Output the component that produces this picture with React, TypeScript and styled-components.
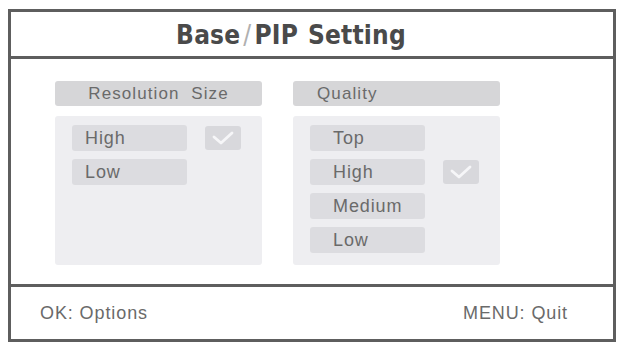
import React from 'react';
import styled, { createGlobalStyle } from 'styled-components';

const GlobalStyle = createGlobalStyle`
  html, body {
    margin: 0;
    padding: 0;
    background: #ffffff;
  }
  body {
    font-family: 'Liberation Sans', Arial, sans-serif;
  }
`;

// frame
const Frame = styled.div`
  box-sizing: border-box;
  margin: 9px 0 0 8px;
  width: 608px;
  height: 333px;
  border: 3px solid #5e5e5e;
  display: flex;
  flex-direction: column;
  background: #fff;
`;

const TitleBar = styled.div`
  height: 47px;
  border-bottom: 3px solid #5e5e5e;
  display: flex;
  align-items: center;
  justify-content: center;
  font-family: 'DejaVu Sans Condensed', 'Liberation Sans', Arial, sans-serif;
  font-weight: 700;
  font-size: 26px;
  letter-spacing: 0.2px;
  color: #4a4a4a;
  padding: 2px 42px 0 0;
  box-sizing: border-box;
`;

const Slash = styled.span`
  font-weight: 400;
  color: #b0b0b0;
  margin: 0 3px;
`;

const TitleGap = styled.span`
  display: inline-block;
  width: 10px;
`;

const Content = styled.div`
  flex: 1;
  display: flex;
  gap: 31px;
  padding: 22px 0 0 44px;
`;

const Column = styled.div`
  width: 207px;
  display: flex;
  flex-direction: column;
  gap: 10px;
`;

const Header = styled.div<{ $align: 'center' | 'left' }>`
  height: 25px;
  border-radius: 3px;
  background: #d6d6d8;
  color: #6a6a6a;
  font-size: 17px;
  letter-spacing: 1.1px;
  line-height: 25px;
  text-align: ${({ $align }) => $align};
  padding-left: ${({ $align }) => ($align === 'left' ? '24px' : '0')};
`;

const Panel = styled.div`
  height: 149px;
  box-sizing: border-box;
  border-radius: 3px;
  background: #eeeef1;
  padding: 9px 0 0 17px;
  display: flex;
  flex-direction: column;
  gap: 8px;
`;

const Row = styled.div`
  display: flex;
  align-items: center;
  gap: 18px;
`;

const Item = styled.div<{ $indent: number }>`
  width: 115px;
  height: 26px;
  box-sizing: border-box;
  border-radius: 3px;
  background: #dcdce0;
  color: #6a6a6a;
  font-size: 18px;
  letter-spacing: 0.9px;
  line-height: 26px;
  padding-left: ${({ $indent }) => $indent}px;
`;

const CheckBox = styled.div`
  width: 36px;
  height: 24px;
  border-radius: 3px;
  background: #d8d8dc;
  display: flex;
  align-items: center;
  justify-content: center;
`;

const Footer = styled.div`
  height: 52px;
  border-top: 3px solid #5e5e5e;
  display: flex;
  align-items: center;
  justify-content: space-between;
  padding: 0 45px 0 29px;
  color: #6a6a6a;
  font-size: 18px;
  letter-spacing: 0.9px;
`;

const Check = () => (
  <CheckBox>
    <svg width="24" height="16" viewBox="0 0 24 16">
      <polyline
        points="3,7 10,13 21,3"
        fill="none"
        stroke="#f6f6f8"
        strokeWidth="2.8"
        strokeLinecap="round"
        strokeLinejoin="round"
      />
    </svg>
  </CheckBox>
);

type Option = { label: string; checked?: boolean };

const resolution: Option[] = [{ label: 'High', checked: true }, { label: 'Low' }];
const quality: Option[] = [
  { label: 'Top' },
  { label: 'High', checked: true },
  { label: 'Medium' },
  { label: 'Low' },
];

const OptionColumn = ({
  title,
  align,
  indent,
  options,
}: {
  title: string;
  align: 'center' | 'left';
  indent: number;
  options: Option[];
}) => (
  <Column>
    <Header $align={align}>{title}</Header>
    <Panel>
      {options.map(opt => (
        <Row key={opt.label}>
          <Item $indent={indent}>{opt.label}</Item>
          {opt.checked && <Check />}
        </Row>
      ))}
    </Panel>
  </Column>
);

export default function App() {
  return (
    <>
      <GlobalStyle />
      <Frame>
        <TitleBar>
          Base<Slash>/</Slash>PIP<TitleGap />Setting
        </TitleBar>
        <Content>
          <OptionColumn
            title={'Resolution\u00a0 Size'}
            align="center"
            indent={13}
            options={resolution}
          />
          <OptionColumn title="Quality" align="left" indent={23} options={quality} />
        </Content>
        <Footer>
          <span>OK: Options</span>
          <span>MENU: Quit</span>
        </Footer>
      </Frame>
    </>
  );
}
